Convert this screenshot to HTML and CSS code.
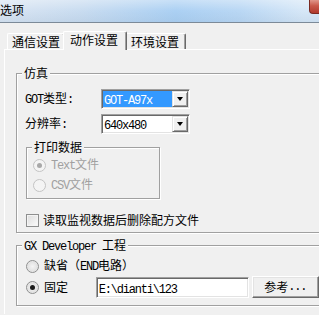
FILE: index.html
```html
<!DOCTYPE html>
<html>
<head>
<meta charset="utf-8">
<link rel="stylesheet" href="styles.css">
</head>
<body>
<div class="titlebar"><span class="title">选项</span><span class="close"></span></div>
<div class="content">
  <div class="tabs">
    <div class="tab first">通信设置</div>
    <div class="tab active">动作设置</div>
    <div class="tab last">环境设置</div>
  </div>
  <div class="panel">
    <div class="group sim">
      <div class="gtitle">仿真</div>
      <div class="frow r1">
        <span class="flabel"><span class="lat">GOT</span>类型<span class="lat">:</span></span>
        <div class="combo"><span class="ctext sel"><span class="lat">GOT-A97x</span></span><span class="dd"><i></i></span></div>
      </div>
      <div class="frow r2">
        <span class="flabel">分辨率<span class="lat">:</span></span>
        <div class="combo"><span class="ctext"><span class="lat">640x480</span></span><span class="dd"><i></i></span></div>
      </div>
      <div class="group print">
        <div class="gtitle">打印数据</div>
        <div class="opt dis o1"><span class="radio checked"></span><span><span class="lat">Text</span>文件</span></div>
        <div class="opt dis o2"><span class="radio"></span><span><span class="lat">CSV</span>文件</span></div>
      </div>
      <div class="opt chk"><span class="cbox"></span><span>读取监视数据后删除配方文件</span></div>
    </div>
    <div class="group gx">
      <div class="gtitle"><span class="lat">GX Developer </span>工程</div>
      <div class="opt g1"><span class="radio"></span><span>缺省（<span class="lat">END</span>电路）</span></div>
      <div class="opt g2"><span class="radio checked"></span><span class="fl">固定</span><div class="input"><span class="lat">E:\dianti\123</span></div><div class="btn">参考<span class="lat">...</span></div></div>
    </div>
  </div>
</div>
</body>
</html>
```
FILE: styles.css
```css
html, body {
  margin: 0;
  padding: 0;
  overflow: hidden;
  background: #f0f0f0;
}
body {
  width: 319px;
  height: 315px;
  font-family: "Noto Sans CJK SC", sans-serif;
  font-size: 12px;
  line-height: 14px;
  color: #000;
}
.lat {
  font-family: "Liberation Mono", monospace;
  font-size: 12px;
  letter-spacing: -1.2px;
  white-space: pre;
}

/* title bar */
.titlebar {
  display: flex;
  height: 22px;
  border-bottom: 1px solid #7c8a98;
  background:
    linear-gradient(rgba(255,255,255,0.35), rgba(255,255,255,0) 50%, rgba(120,150,180,0.12)),
    linear-gradient(to right, #d9e5f2 0%, #c9dcf0 25%, #abd0f3 55%, #b9d7f4 75%, #d6e7f7 95%);
}
.title {
  margin: 3px 0 0 0;
  font-size: 12px;
  line-height: 14px;
}
.close {
  margin-left: auto;
  width: 9px;
  height: 13px;
  border-left: 1px solid #7a2a22;
  border-bottom: 1px solid #7a2a22;
  border-radius: 0 0 0 4px;
  background: linear-gradient(#e0968a, #c9584a 45%, #b03a2e);
}

/* tabs */
.content {
  padding-top: 8px;
}
.tabs {
  display: flex;
  align-items: flex-end;
  height: 18px;
  margin-left: 7px;
}
.tab {
  box-sizing: border-box;
  height: 16px;
  line-height: 15px;
  padding: 0 4px;
  border-top: 1px solid #fff;
  border-left: 1px solid #fff;
  border-right: 1px solid #696969;
  box-shadow: inset -1px 0 0 #a0a0a0;
  border-radius: 2px 2px 0 0;
  background: #f0f0f0;
}
.tab.active {
  position: relative;
  z-index: 1;
  height: 19px;
  line-height: 15px;
  margin: 0 -2px -1px;
  padding: 0 8px 0 6px;
}
.tab.last {
  padding: 0 6px 0 5px;
}

/* panel */
.panel {
  margin-left: 4px;
  border-top: 1px solid #fff;
  border-left: 1px solid #fff;
  padding-left: 11px;
  height: 264px;
  overflow: hidden;
}

/* group boxes */
.group {
  box-sizing: border-box;
  border: 1px solid #a0a0a0;
  box-shadow: inset 1px 1px 0 #fff, 1px 1px 0 #fff;
}
.gtitle {
  width: max-content;
  margin: -8px 0 0 5px;
  padding: 0 2px;
  background: #f0f0f0;
  line-height: 14px;
}
.sim, .gx {
  border-right: 0;
}
.sim {
  margin-top: 23px;
  padding-bottom: 5px;
}
.gx {
  margin-top: 12px;
  padding-bottom: 7px;
}

/* form rows */
.frow {
  display: flex;
  align-items: center;
  margin-left: 8px;
}
.r1 { margin-top: 9px; }
.r2 { margin-top: 5px; }
.flabel {
  width: 76px;
}
.combo {
  box-sizing: border-box;
  display: flex;
  width: 89px;
  height: 20px;
  padding: 1px;
  border: 1px solid;
  border-color: #a0a0a0 #fff #fff #a0a0a0;
  box-shadow: inset 1px 1px 0 #696969, inset -1px -1px 0 #e3e3e3;
  background: #fff;
}
.ctext {
  flex: 1;
  padding-left: 1px;
  line-height: 16px;
}
.ctext.sel {
  background: #3399ff;
  color: #fff;
}
.dd {
  box-sizing: border-box;
  width: 16px;
  display: flex;
  align-items: center;
  justify-content: center;
  border: 1px solid;
  border-color: #e3e3e3 #696969 #696969 #e3e3e3;
  box-shadow: inset 1px 1px 0 #fff, inset -1px -1px 0 #a0a0a0;
  background: #f0f0f0;
}
.dd i {
  width: 0;
  height: 0;
  border-style: solid;
  border-width: 4px 3.5px 0;
  border-color: #000 transparent transparent;
}

/* print group */
.print {
  width: 134px;
  margin: 13px 0 0 9px;
  padding-bottom: 6px;
}

/* options */
.opt {
  display: flex;
  align-items: center;
  gap: 5px;
  height: 14px;
}
.print .opt { margin-left: 6px; }
.o1 { margin-top: 4px; }
.o2 { margin-top: 6px; }
.dis { color: #a0a0a0; }

.radio {
  box-sizing: border-box;
  flex: none;
  width: 13px;
  height: 13px;
  border-radius: 50%;
  border: 1px solid #8e8f8f;
  background: radial-gradient(circle at 50% 50%, #f4f4f4 0, #e2e2e2 60%, #fdfdfd 100%);
  display: flex;
  align-items: center;
  justify-content: center;
}
.radio.checked::after {
  content: "";
  width: 5px;
  height: 5px;
  border-radius: 50%;
  background: #1a1a1a;
}
.dis .radio {
  border-color: #c4c4c4;
  background: #f4f4f4;
}
.dis .radio.checked::after {
  background: #a8a8a8;
}

.chk {
  margin: 14px 0 0 9px;
  gap: 4px;
}
.cbox {
  box-sizing: border-box;
  flex: none;
  width: 13px;
  height: 13px;
  border: 1px solid #8e8f8f;
  background: linear-gradient(135deg, #dcdcdc, #fbfbfb);
  box-shadow: inset 0 0 0 1px #f4f4f4;
}

/* GX group */
.gx .opt { margin-left: 9px; }
.g1 { margin-top: 5px; }
.g2 {
  margin-top: 3px;
  height: 22px;
}
.fl {
  width: 47px;
}
.input {
  box-sizing: border-box;
  width: 154px;
  height: 21px;
  padding: 2px 0 0 2px;
  border: 1px solid;
  border-color: #a0a0a0 #fff #fff #a0a0a0;
  box-shadow: inset 1px 1px 0 #696969, inset -1px -1px 0 #e3e3e3;
  background: #fff;
  line-height: 16px;
}
.btn {
  box-sizing: border-box;
  width: 68px;
  height: 22px;
  margin-left: -2px;
  display: flex;
  align-items: center;
  justify-content: center;
  border: 1px solid;
  border-color: #fff #696969 #696969 #fff;
  box-shadow: inset -1px -1px 0 #a0a0a0, inset 1px 1px 0 #e3e3e3;
  background: #f0f0f0;
}
```
